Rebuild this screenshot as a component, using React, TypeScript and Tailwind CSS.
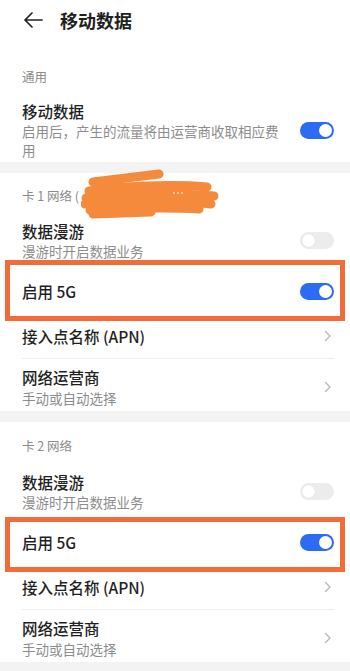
import * as React from 'react';

const font = { fontFamily: '"Noto Sans CJK SC", "Noto Sans", sans-serif' };

const Toggle: React.FC<{ on?: boolean }> = ({ on }) => (
  <div
    className={`relative w-[34px] h-[17px] rounded-full shrink-0 ${on ? 'bg-[#2b6cf2]' : 'bg-[#ececec]'}`}
  >
    <div
      className={`absolute top-[2px] w-[13px] h-[13px] rounded-full bg-white ${on ? 'right-[2px]' : 'left-[2px] shadow-[0_0_1px_rgba(0,0,0,0.15)]'}`}
    />
  </div>
);

const Chevron = () => (
  <svg width="8" height="12" viewBox="0 0 8 12" className="shrink-0 mr-[2px]">
    <path d="M1.5 1.5 L6 6 L1.5 10.5" fill="none" stroke="#b8b8b8" strokeWidth="1.4" strokeLinecap="round" strokeLinejoin="round" />
  </svg>
);

const Divider = () => <div className="ml-[22px] mr-[16px] h-px bg-[#eeeeee]" />;
const Band = ({ h = 'h-[11px]' }: { h?: string }) => <div className={`${h} bg-[#f3f3f3]`} />;

const Label: React.FC<{ h: string; children: React.ReactNode }> = ({ h, children }) => (
  <div className={`relative ${h} flex items-center px-[22px] text-[12.5px] leading-[18px] text-[#8a8a8a]`}>
    {children}
  </div>
);

const TwoLine: React.FC<{ title: string; sub: string; right: React.ReactNode }> = ({ title, sub, right }) => (
  <div className="flex items-center pl-[22px] pr-[16px] py-[2px]">
    <div className="flex-1">
      <div className="text-[15.5px] leading-[20px] font-medium text-[#1f1f1f]">{title}</div>
      <div className="mt-[1px] text-[13.5px] leading-[18px] text-[#8c8c8c]">{sub}</div>
    </div>
    {right}
  </div>
);

// 启用 5G row with the orange annotation frame drawn over it
const FiveG: React.FC<{ frameTop: string }> = ({ frameTop }) => (
  <div className="relative h-[52px] pt-[6px] flex items-center pl-[22px] pr-[16px]">
    <div className="flex-1 text-[15.5px] leading-[20px] font-medium text-[#1f1f1f]">启用 5G</div>
    <Toggle on />
    <div className={`absolute left-[5px] right-[5px] ${frameTop} bottom-[-7px] border-[5px] border-[#f26b3b]`} />
  </div>
);

const Apn = () => (
  <div className="h-[44px] flex items-center pl-[22px] pr-[16px]">
    <div className="flex-1 text-[15.5px] leading-[20px] font-medium text-[#1f1f1f]">接入点名称 (APN)</div>
    <Chevron />
  </div>
);

const Carrier = () => (
  <div className="flex items-center pl-[22px] pr-[16px] pt-[8px] pb-[4px]">
    <div className="flex-1">
      <div className="text-[15.5px] leading-[20px] font-medium text-[#1f1f1f]">网络运营商</div>
      <div className="mt-[2px] text-[13.5px] leading-[18px] text-[#8c8c8c]">手动或自动选择</div>
    </div>
    <Chevron />
  </div>
);

const Scribble = () => (
  <svg width="140" height="50" viewBox="0 0 140 50" className="absolute left-[81px] top-[-4px]">
    <g fill="none" stroke="#f58a3c" strokeLinecap="round" strokeWidth="9">
      <path d="M12 13 L78 5" />
      <path d="M8 22 C40 17 90 15 126 18" />
      <path d="M5 29 C50 24 100 24 133 27" />
      <path d="M4 35 C50 32 100 31 130 35" />
      <path d="M9 41 C40 39 90 38 118 40" />
      <path d="M12 45 L70 43" />
    </g>
    <g fill="#fde6d3">
      <circle cx="93" cy="24" r="0.9" />
      <circle cx="97" cy="24" r="0.9" />
      <circle cx="101" cy="24" r="0.9" />
    </g>
  </svg>
);

export default function App() {
  return (
    <div className="w-[350px] h-[671px] bg-white overflow-hidden" style={font}>
      <div className="h-[40px] flex items-center pl-[23px]">
        <svg width="20" height="18" viewBox="0 0 20 18">
          <path d="M19 9 H2 M9 2 L2 9 L9 16" fill="none" stroke="#222" strokeWidth="1.7" strokeLinecap="round" strokeLinejoin="round" />
        </svg>
        <div className="ml-[17px] text-[18px] leading-[24px] font-bold text-[#1f1f1f]">移动数据</div>
      </div>

      <div className="px-[22px] pt-[28px] pb-[9px] text-[12.5px] leading-[18px] text-[#8a8a8a]">通用</div>
      <div className="flex items-center pl-[22px] pr-[16px] pt-[5px] pb-[2px]">
        <div className="flex-1 mr-[18px]">
          <div className="text-[15.5px] leading-[22px] font-medium text-[#1f1f1f]">移动数据</div>
          <div className="text-[13.5px] leading-[19px] text-[#8c8c8c]">启用后，产生的流量将由运营商收取相应费用</div>
        </div>
        <Toggle on />
      </div>

      <Band />

      <Label h="h-[46px]">
        卡 1 网络 (
        <Scribble />
      </Label>
      <TwoLine title="数据漫游" sub="漫游时开启数据业务" right={<Toggle />} />
      <FiveG frameTop="top-[-2px]" />
      <Apn />
      <Divider />
      <Carrier />

      <Band />

      <Label h="h-[48px]">卡 2 网络</Label>
      <TwoLine title="数据漫游" sub="漫游时开启数据业务" right={<Toggle />} />
      <FiveG frameTop="top-[4px]" />
      <Apn />
      <Divider />
      <Carrier />

      <Band />
    </div>
  );
}
